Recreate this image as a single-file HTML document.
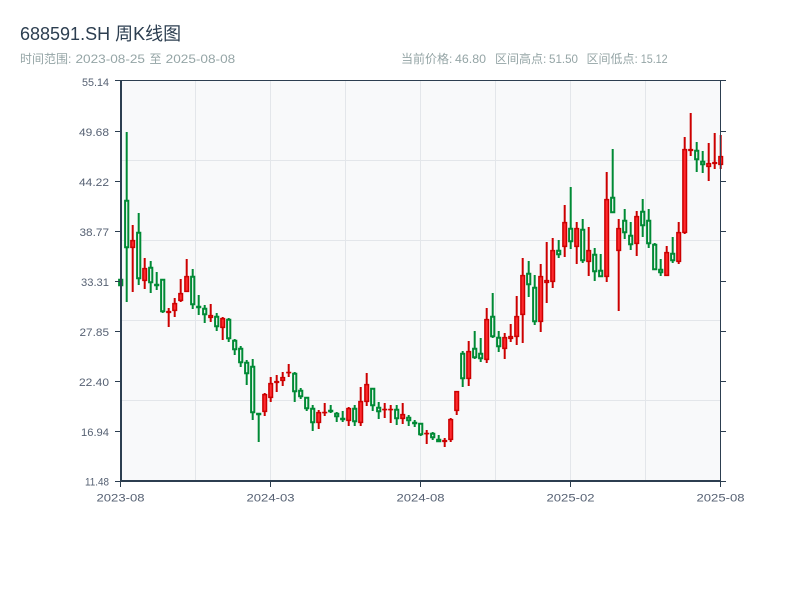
<!DOCTYPE html>
<html lang="zh"><head><meta charset="utf-8"><title>688591.SH 周K线图</title>
<style>
html,body{margin:0;padding:0;background:#fff;width:800px;height:600px;overflow:hidden}
svg{display:block;position:absolute;left:0;top:0}
text{font-family:"Liberation Sans","Noto Sans CJK SC",sans-serif}
.t{font-size:18px;fill:#2c3e50}
.s{font-size:12px;fill:#95a5a6}
.a{font-size:11px;fill:#566173}
</style></head><body>
<svg width="800" height="600" viewBox="0 0 800 600" xmlns="http://www.w3.org/2000/svg">
<text class="t" x="20" y="40">688591.SH 周K线图</text>
<text class="s" x="20" y="63">时间范围:</text>
<text class="s" x="75.5" y="63" textLength="69.5" lengthAdjust="spacingAndGlyphs">2023-08-25</text>
<text class="s" x="149.5" y="63">至</text>
<text class="s" x="165.7" y="63" textLength="69.5" lengthAdjust="spacingAndGlyphs">2025-08-08</text>
<text class="s" x="401" y="63">当前价格:</text>
<text class="s" x="455" y="63" textLength="31" lengthAdjust="spacingAndGlyphs">46.80</text>
<text class="s" x="495" y="63">区间高点:</text>
<text class="s" x="549" y="63" textLength="29" lengthAdjust="spacingAndGlyphs">51.50</text>
<text class="s" x="586.5" y="63">区间低点:</text>
<text class="s" x="640.7" y="63" textLength="27" lengthAdjust="spacingAndGlyphs">15.12</text>
<rect x="121" y="81" width="600" height="400" fill="#f8f9fa"/>
<path d="M121 160.5H721M121 240.5H721M121 320.5H721M121 400.5H721M195.5 81V481M270.5 81V481M345.5 81V481M420.5 81V481M495.5 81V481M570.5 81V481M645.5 81V481" stroke="#e3e6ea" stroke-width="1" fill="none"/>
<g transform="translate(-0.3 0)">
<path fill="none" stroke="#008a35" stroke-width="2" d="M121 279V286M127 132V302M139 213V285M151 261V293M157 272V290M163 279V313M193 269V309M199 295V315M205 305V323M217 313V331M229 318V342M235 339V355M241 346V367M247 360V385M253 359V420M259 413V442M295 372V402M301 388V399M307 397V411M313 405V431M331 405V413M337 412V422M343 411V422M355 405V426M373 388V411M379 402V419M397 405V425M409 415V426M415 420V427M421 423V436M433 432V440M439 435V442M463 351V387M475 331V359M481 338V362M493 293V338M499 331V352M529 261V297M535 275V325M559 240V258M571 187V249M583 219V263M595 248V281M601 254V277M613 149V213M625 209V239M631 222V250M643 199V237M649 209V248M655 243V270M661 259V276M673 237V263M697 142V172M703 151V173"/>
<path fill="none" stroke="#cc0000" stroke-width="2" d="M133 225V292M145 258V289M169 308V327M175 298V317M181 279V302M187 259V292M211 304V322M223 317V340M265 393V416M271 377V402M277 375V392M283 372V386M289 364V377M319 410V429M325 403V416M349 407V426M361 387V426M367 373V406M385 403V418M391 405V423M403 403V424M427 430V444M445 438V447M451 418V442M457 391V415M469 341V386M487 308V363M505 333V359M511 324V342M517 296V345M523 258V343M541 264V332M547 242V303M553 238V288M565 205V257M577 222V264M589 227V276M607 172V282M619 219V311M637 211V256M667 246V276M679 222V264M685 137V234M691 113V156M709 143V181M715 133V169M721 135V169"/>
<path fill="#f8f9fa" stroke="#008a35" stroke-width="2" d="M119.4 279.8h3.2v5.4h-3.2zM125.4 200.8h3.2v46.4h-3.2zM137.4 232.8h3.2v45.4h-3.2zM149.4 267.8h3.2v14.4h-3.2zM155.4 284.8h3.2v.4h-3.2zM161.4 279.8h3.2v31.4h-3.2zM191.4 276.8h3.2v27.4h-3.2zM197.4 306.8h3.2v.4h-3.2zM203.4 308.8h3.2v5.4h-3.2zM215.4 316.8h3.2v9.4h-3.2zM227.4 319.8h3.2v18.4h-3.2zM233.4 340.8h3.2v8.4h-3.2zM239.4 348.8h3.2v13.4h-3.2zM245.4 362.8h3.2v10.4h-3.2zM251.4 366.8h3.2v45.4h-3.2zM257.4 413.8h3.2v.4h-3.2zM293.4 373.8h3.2v17.4h-3.2zM299.4 390.8h3.2v5.4h-3.2zM305.4 397.8h3.2v10.4h-3.2zM311.4 408.8h3.2v13.4h-3.2zM329.4 410.8h3.2v.4h-3.2zM335.4 413.8h3.2v2.4h-3.2zM341.4 418.8h3.2v.4h-3.2zM353.4 408.8h3.2v12.4h-3.2zM371.4 388.8h3.2v16.4h-3.2zM377.4 407.8h3.2v3.4h-3.2zM395.4 409.8h3.2v8.4h-3.2zM407.4 417.8h3.2v2.4h-3.2zM413.4 422.8h3.2v.4h-3.2zM419.4 423.8h3.2v10.4h-3.2zM431.4 433.8h3.2v3.4h-3.2zM437.4 439.8h3.2v1.4h-3.2zM461.4 353.8h3.2v24.4h-3.2zM473.4 348.8h3.2v8.4h-3.2zM479.4 353.8h3.2v4.4h-3.2zM491.4 316.8h3.2v19.4h-3.2zM497.4 337.8h3.2v8.4h-3.2zM527.4 273.8h3.2v10.4h-3.2zM533.4 287.8h3.2v33.4h-3.2zM557.4 250.8h3.2v3.4h-3.2zM569.4 228.8h3.2v12.4h-3.2zM581.4 229.8h3.2v30.4h-3.2zM593.4 254.8h3.2v16.4h-3.2zM599.4 270.8h3.2v5.4h-3.2zM611.4 197.8h3.2v14.4h-3.2zM623.4 220.8h3.2v11.4h-3.2zM629.4 235.8h3.2v8.4h-3.2zM641.4 211.8h3.2v13.4h-3.2zM647.4 220.8h3.2v22.4h-3.2zM653.4 244.8h3.2v24.4h-3.2zM659.4 269.8h3.2v2.4h-3.2zM671.4 253.8h3.2v6.4h-3.2zM695.4 150.8h3.2v8.4h-3.2zM701.4 161.8h3.2v2.4h-3.2z"/>
<path fill="#ff2a2f" stroke="#cc0000" stroke-width="1.5" d="M131.2 240.6h3.6v6.8h-3.6zM143.2 268.6h3.6v11.8h-3.6zM167.2 311.6h3.6v.8h-3.6zM173.2 303.6h3.6v6.8h-3.6zM179.2 293.6h3.6v6.8h-3.6zM185.2 276.6h3.6v14.8h-3.6zM209.2 315.6h3.6v1.8h-3.6zM221.2 318.6h3.6v8.8h-3.6zM263.2 394.6h3.6v16.8h-3.6zM269.2 383.6h3.6v13.8h-3.6zM275.2 381.6h3.6v.8h-3.6zM281.2 377.6h3.6v2.8h-3.6zM287.2 372.5h3.6v.1h-3.6zM317.2 412.6h3.6v9.8h-3.6zM323.2 412.5h3.6v.1h-3.6zM347.2 408.6h3.6v11.8h-3.6zM359.2 401.6h3.6v20.8h-3.6zM365.2 384.6h3.6v16.8h-3.6zM383.2 409.5h3.6v.1h-3.6zM389.2 409.5h3.6v.1h-3.6zM401.2 414.6h3.6v3.8h-3.6zM425.2 433.5h3.6v.1h-3.6zM443.2 440.6h3.6v.8h-3.6zM449.2 419.6h3.6v19.8h-3.6zM455.2 391.6h3.6v18.8h-3.6zM467.2 351.6h3.6v26.8h-3.6zM485.2 319.6h3.6v39.8h-3.6zM503.2 337.6h3.6v10.8h-3.6zM509.2 336.6h3.6v1.8h-3.6zM515.2 316.6h3.6v19.8h-3.6zM521.2 275.6h3.6v38.8h-3.6zM539.2 276.6h3.6v44.8h-3.6zM545.2 280.6h3.6v1.8h-3.6zM551.2 250.6h3.6v30.8h-3.6zM563.2 222.6h3.6v23.8h-3.6zM575.2 228.6h3.6v17.8h-3.6zM587.2 250.6h3.6v10.8h-3.6zM605.2 199.6h3.6v76.8h-3.6zM617.2 228.6h3.6v21.8h-3.6zM635.2 216.6h3.6v26.8h-3.6zM665.2 252.6h3.6v22.8h-3.6zM677.2 232.6h3.6v28.8h-3.6zM683.2 149.6h3.6v82.8h-3.6zM689.2 149.6h3.6v.8h-3.6zM707.2 163.6h3.6v2.8h-3.6zM713.2 162.6h3.6v.8h-3.6zM719.2 156.6h3.6v7.8h-3.6z"/>
</g>
<path fill="none" stroke="#2c3e50" stroke-width="1" d="M115 80.5H726M720.5 80.5V481M115 131.5H121M115 181.5H121M115 231.5H121M115 281.5H121M115 331.5H121M115 381.5H121M115 431.5H121M115 481.5H121M721 131.5H726M721 181.5H726M721 231.5H726M721 281.5H726M721 331.5H726M721 381.5H726M721 431.5H726M721 481.5H726M120.5 481V487M270.5 481V487M420.5 481V487M570.5 481V487M720.5 481V487"/>
<path fill="none" stroke="#2c3e50" stroke-width="2" d="M121 80V482M120 481H721"/>
<text class="a" x="82" y="86" textLength="27" lengthAdjust="spacingAndGlyphs">55.14</text>
<text class="a" x="79" y="136" textLength="30" lengthAdjust="spacingAndGlyphs">49.68</text>
<text class="a" x="79" y="186" textLength="30" lengthAdjust="spacingAndGlyphs">44.22</text>
<text class="a" x="79.5" y="236" textLength="29.5" lengthAdjust="spacingAndGlyphs">38.77</text>
<text class="a" x="81" y="286" textLength="28" lengthAdjust="spacingAndGlyphs">33.31</text>
<text class="a" x="79.5" y="336" textLength="29.5" lengthAdjust="spacingAndGlyphs">27.85</text>
<text class="a" x="79" y="386" textLength="30" lengthAdjust="spacingAndGlyphs">22.40</text>
<text class="a" x="81" y="436" textLength="28" lengthAdjust="spacingAndGlyphs">16.94</text>
<text class="a" x="85" y="485.5" textLength="24" lengthAdjust="spacingAndGlyphs">11.48</text>
<text class="a" x="96.5" y="501.5" textLength="48" lengthAdjust="spacingAndGlyphs">2023-08</text>
<text class="a" x="246.5" y="501.5" textLength="48" lengthAdjust="spacingAndGlyphs">2024-03</text>
<text class="a" x="396.5" y="501.5" textLength="48" lengthAdjust="spacingAndGlyphs">2024-08</text>
<text class="a" x="546.5" y="501.5" textLength="48" lengthAdjust="spacingAndGlyphs">2025-02</text>
<text class="a" x="696.5" y="501.5" textLength="48" lengthAdjust="spacingAndGlyphs">2025-08</text>
</svg>
</body></html>
